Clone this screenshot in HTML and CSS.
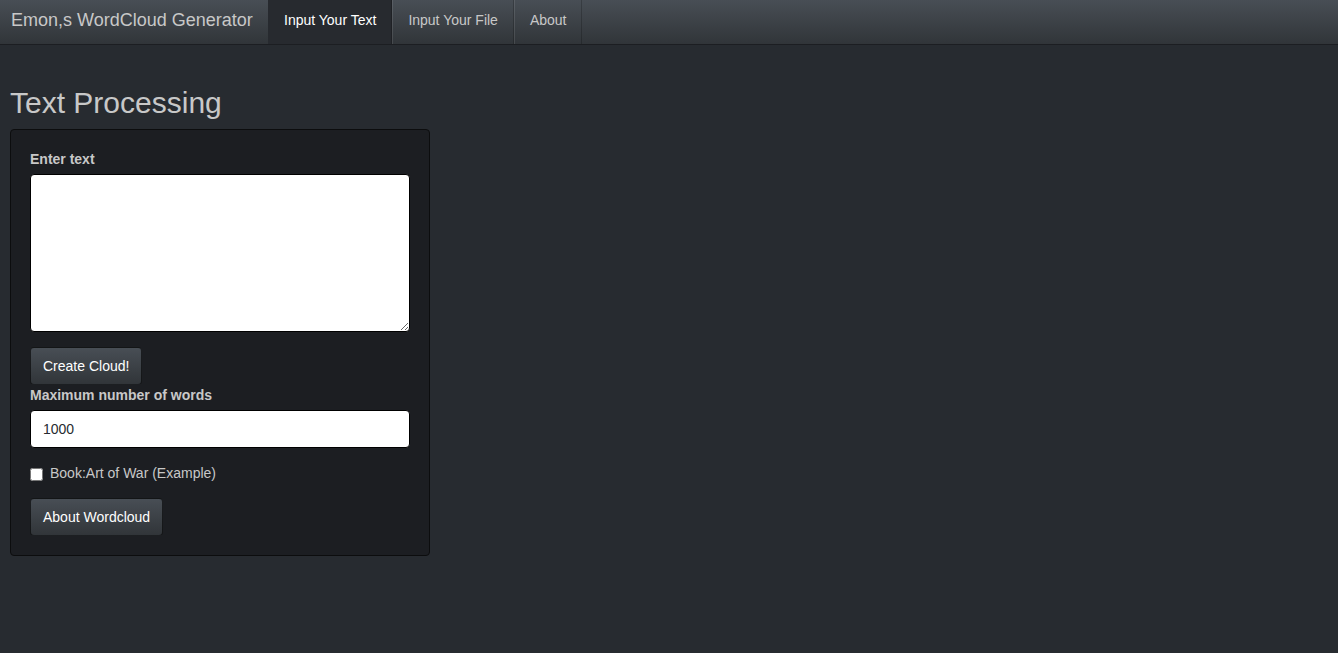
FILE: index.html
```html
<!DOCTYPE html>
<html>
<head>
<meta charset="utf-8">
<link rel="stylesheet" href="styles.css">
</head>
<body>
<nav class="navbar">
  <span class="brand">Emon,s WordCloud Generator</span>
  <ul class="nav">
    <li class="active"><a>Input Your Text</a></li>
    <li><a>Input Your File</a></li>
    <li><a>About</a></li>
  </ul>
</nav>
<main class="content">
  <h2 class="title">Text Processing</h2>
  <div class="well">
    <label class="lbl">Enter text</label>
    <textarea class="textarea"></textarea>
    <button class="btn btn-create">Create Cloud!</button>
    <label class="lbl lbl-max">Maximum number of words</label>
    <input class="input" type="text" value="1000">
    <label class="check"><input type="checkbox" class="cb"><span>Book:Art of War (Example)</span></label>
    <button class="btn btn-about">About Wordcloud</button>
  </div>
</main>
</body>
</html>
```

FILE: styles.css
```css
* { box-sizing: border-box; }
html, body { margin: 0; padding: 0; }
body {
  background: #272b30;
  color: #c8c8c8;
  font-family: "Liberation Sans", Arial, sans-serif;
  font-size: 14px;
  line-height: 1.42857;
  height: 653px;
  overflow: hidden;
}
.navbar {
  display: flex;
  align-items: stretch;
  height: 45px;
  background: linear-gradient(#484e55, #3a3f44 60%, #313539);
  border-bottom: 1px solid #1c1e22;
}
.brand {
  font-size: 18px;
  color: #c8c8c8;
  padding: 0 15px 0 11px;
  line-height: 40px;
  width: 268px;
}
.nav {
  display: flex;
  list-style: none;
  margin: 0;
  padding: 0;
}
.nav li a {
  display: block;
  padding: 0 15px;
  line-height: 40px;
  height: 44px;
  color: #c8c8c8;
  border-left: 1px solid rgba(255,255,255,0.1);
  border-right: 1px solid rgba(0,0,0,0.2);
}
.nav li.active a {
  background: #272a2f;
  color: #ffffff;
  border-left-color: transparent;
}
.content { padding: 0 10px; }
.title {
  font-size: 30px;
  font-weight: 400;
  line-height: 1.1;
  margin: 41px 0 10px 0;
  color: #c8c8c8;
}
.well {
  width: 420px;
  background: #1c1e22;
  border: 1px solid #0c0d0e;
  border-radius: 4px;
  padding: 19px;
  display: flex;
  flex-direction: column;
  align-items: flex-start;
}
.lbl {
  font-weight: 700;
  margin: 0 0 5px 0;
  line-height: 20px;
}
.textarea {
  width: 380px;
  height: 158px;
  border: 1px solid #000;
  border-radius: 4px;
  background: #fff;
  resize: vertical;
  margin: 0 0 15px 0;
}
.btn {
  font-family: "Liberation Sans", Arial, sans-serif;
  font-size: 14px;
  color: #fff;
  background: linear-gradient(#484e55, #3a3f44 60%, #313539);
  border: 1px solid rgba(0,0,0,0.6);
  border-radius: 4px;
  padding: 8px 12px;
  line-height: 20px;
  height: 38px;
}
.btn-create { margin-bottom: 0; }
.lbl-max { margin-bottom: 5px; }
.input {
  width: 380px;
  height: 38px;
  border: 1px solid #000;
  border-radius: 4px;
  background: #fff;
  padding: 8px 12px;
  font-family: "Liberation Sans", Arial, sans-serif;
  font-size: 14px;
  color: #272b30;
  margin: 0 0 16px 0;
}
.check {
  display: flex;
  align-items: center;
  height: 20px;
  margin: 0 0 14px 0;
}
.cb {
  width: 13px;
  height: 13px;
  margin: 0 7px 0 0;
}
.btn-about { margin-bottom: 0; }
```
